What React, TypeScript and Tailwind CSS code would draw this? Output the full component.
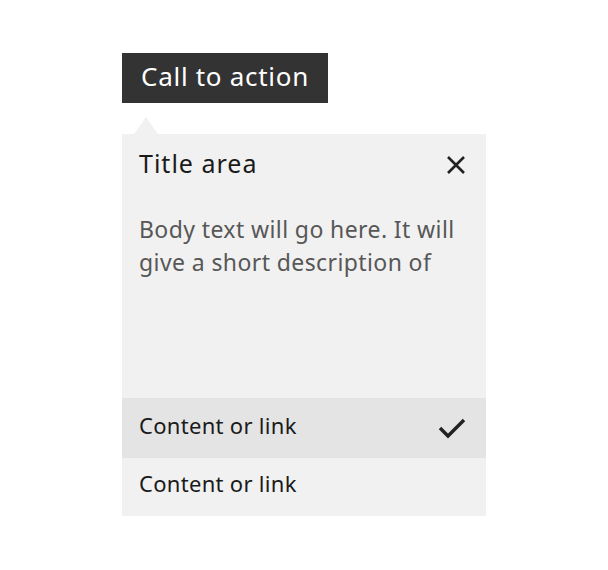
export default function App() {
  return (
    <main className="min-h-screen bg-white font-['Noto_Sans',sans-serif] pl-[122px] pt-[53px]">
      {/* Trigger */}
      <button className="flex h-[50px] w-[206px] items-center justify-center bg-[#333333] pb-[3px] text-[26px] tracking-[0.7px] text-white">
        Call to action
      </button>

      {/* Popover */}
      <div className="relative mt-[31px] w-[364px] bg-[#f1f1f1]">
        <div className="absolute -top-[17px] left-[12px] h-0 w-0 border-x-[12px] border-b-[17px] border-x-transparent border-b-[#f1f1f1]" />

        <div className="flex items-center justify-between pl-[17px] pr-[20px] pt-[11px]">
          <h2 className="text-[25px] tracking-[1px] text-[#1a1a1a]">Title area</h2>
          <svg width="20" height="20" viewBox="0 0 20 20" className="mt-[2px] text-[#222]">
            <path d="M2 2L18 18M18 2L2 18" stroke="currentColor" strokeWidth="2.6" />
          </svg>
        </div>

        <p className="h-[215px] pl-[17px] pr-[14px] pt-[30px] text-[23px] leading-[33px] tracking-[0.4px] text-[#575757]">
          Body text will go here. It will give a short description of
        </p>

        <div className="flex h-[60px] items-center justify-between bg-[#e4e4e4] pl-[17px] pr-[20px]">
          <span className="pb-[4px] text-[22px] tracking-[0.3px] text-[#1a1a1a]">Content or link</span>
          <svg width="28" height="22" viewBox="0 0 28 22" className="text-[#222]">
            <path d="M2 11L10 19L26 3" fill="none" stroke="currentColor" strokeWidth="3.4" />
          </svg>
        </div>
        <div className="flex h-[58px] items-center pl-[17px] pr-[20px]">
          <span className="pb-[6px] text-[22px] tracking-[0.3px] text-[#1a1a1a]">Content or link</span>
        </div>
      </div>
    </main>
  );
}
